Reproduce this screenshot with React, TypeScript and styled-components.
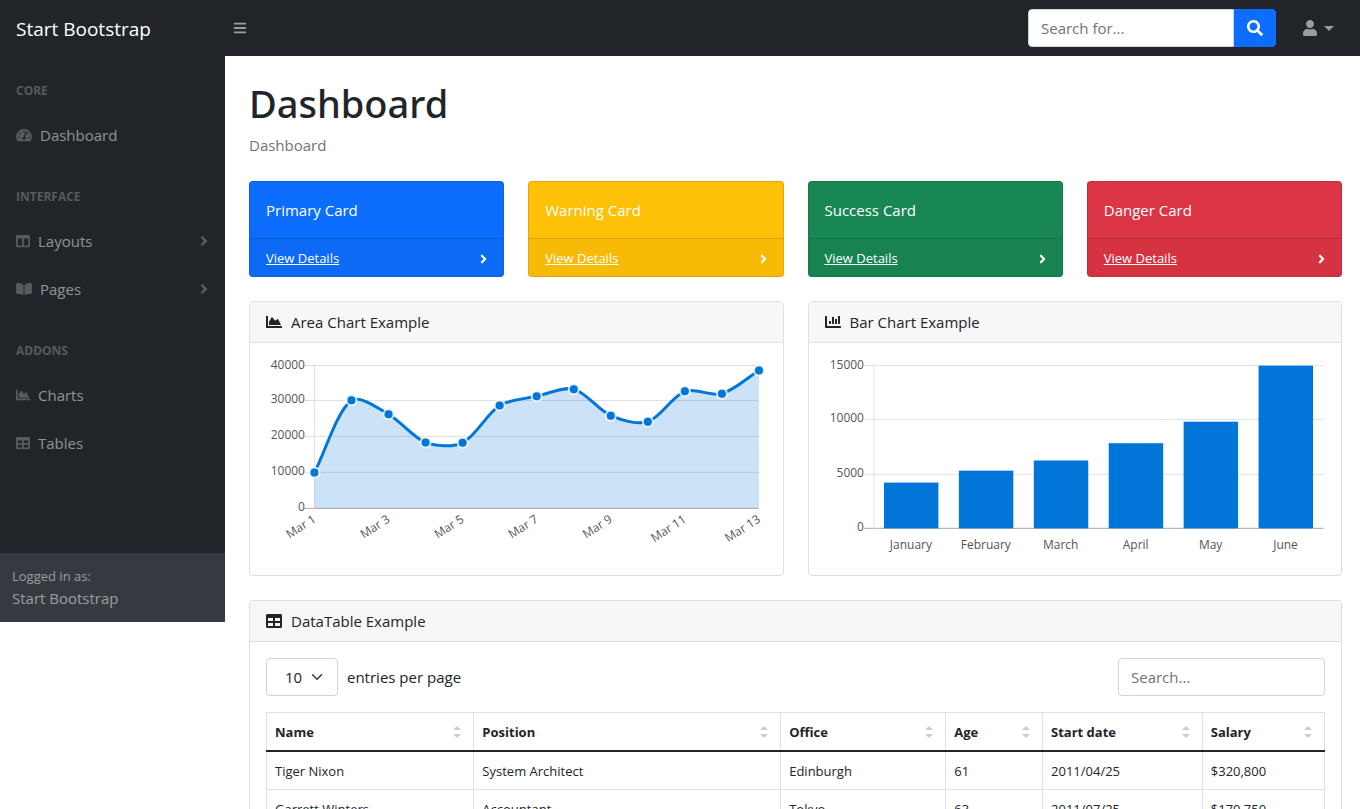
import React from "react";
import styled, { createGlobalStyle } from "styled-components";
import {
  FaAngleRight,
  FaBars,
  FaBookOpen,
  FaChartArea,
  FaChartBar,
  FaColumns,
  FaSearch,
  FaTable,
  FaTachometerAlt,
  FaUser,
} from "react-icons/fa";

const GlobalStyle = createGlobalStyle`
  *, *::before, *::after { box-sizing: border-box; }
  html { scrollbar-width: none; }
  body {
    margin: 0;
    background: #fff;
    color: #212529;
    font-family: "Segoe UI", "Open Sans", "Noto Sans", sans-serif;
    font-size: 15px;
    line-height: 24px;
  }
  button, input, select { font: inherit; color: inherit; }
`;

const TopBar = styled.header`
  display: flex;
  align-items: center;
  height: 56px;
  padding-right: 26px;
  background: #212529;
`;

const Brand = styled.a`
  flex: 0 0 225px;
  padding: 2px 0 0 16px;
  color: #fff;
  font-size: 19px;
  line-height: 30px;
  text-decoration: none;
`;

const PlainButton = styled.button`
  display: flex;
  align-items: center;
  padding: 0;
  border: 0;
  background: none;
  cursor: pointer;
`;

const MenuToggle = styled(PlainButton)`
  margin: 0 auto 0 8px;
  color: rgba(255, 255, 255, 0.55);
`;

const SearchForm = styled.form`
  display: flex;
  width: 248px;
  margin-right: 26px;
`;

const TextInput = styled.input`
  min-width: 0;
  height: 38px;
  padding: 0 12px;
  border: 1px solid #ced4da;
  border-radius: 4px;
  background: #fff;
  outline: none;
  &::placeholder { color: #6c757d; opacity: 1; }
`;

const NavSearch = styled(TextInput)`
  flex: 1;
  border-radius: 4px 0 0 4px;
`;

const SearchButton = styled(PlainButton)`
  justify-content: center;
  width: 42px;
  height: 38px;
  border-radius: 0 4px 4px 0;
  background: #0d6efd;
  color: #fff;
`;

const UserButton = styled(PlainButton)`
  gap: 6px;
  color: rgba(255, 255, 255, 0.55);
`;

const Caret = styled.span`
  border-top: 5px solid;
  border-left: 5px solid transparent;
  border-right: 5px solid transparent;
`;

const Layout = styled.div`
  display: flex;
  align-items: flex-start;
`;

const Sidebar = styled.aside`
  display: flex;
  flex: 0 0 225px;
  flex-direction: column;
  justify-content: space-between;
  min-height: 70vh;
  background: #212529;
  color: rgba(255, 255, 255, 0.5);
`;

const NavSection = styled.section`
  padding-bottom: 3px;
`;

const NavHeading = styled.h2`
  margin: 0;
  padding: 26px 16px 11px;
  color: rgba(255, 255, 255, 0.25);
  font-size: 12px;
  line-height: 18px;
  font-weight: 700;
  text-transform: uppercase;
`;

const NavLink = styled.a`
  display: flex;
  align-items: center;
  gap: 8px;
  padding: 12px 16px;
  color: inherit;
  text-decoration: none;
  svg { color: rgba(255, 255, 255, 0.25); }
`;

const NavLabel = styled.span`
  flex: 1;
`;

const SidebarFooter = styled.footer`
  padding: 12px;
  background: #343a40;
`;

const SmallText = styled.div`
  padding-top: 1px;
  font-size: 13px;
  line-height: 20px;
`;

const Main = styled.main`
  flex: 1;
  min-width: 0;
  padding: 21px 18px 24px 24px;
`;

const PageTitle = styled.h1`
  margin: 0 0 6px;
  padding-top: 2px;
  font-family: "Segoe UI", "Noto Sans", sans-serif;
  font-size: 38px;
  line-height: 48px;
  font-weight: 500;
`;

const Breadcrumb = styled.nav`
  margin-bottom: 24px;
  color: #6c757d;
`;

const Grid = styled.div<{ $columns: number }>`
  display: grid;
  grid-template-columns: repeat(${(p) => p.$columns}, minmax(0, 1fr));
  gap: 24px;
  margin-bottom: 24px;
`;

const StatCard = styled.article<{ $color: string }>`
  border: 1px solid rgba(0, 0, 0, 0.125);
  border-radius: 4px;
  background: ${(p) => p.$color};
  color: #fff;
`;

const StatBody = styled.div`
  padding: 16px;
`;

const StatFooter = styled.div`
  display: flex;
  align-items: center;
  justify-content: space-between;
  padding: 9px 16px 7px;
  border-top: 1px solid rgba(0, 0, 0, 0.125);
  background: rgba(0, 0, 0, 0.03);
  font-size: 13px;
  line-height: 21px;
  a { color: #fff; }
`;

const Card = styled.section`
  border: 1px solid #dfdfdf;
  border-radius: 4px;
  background: #fff;
`;

const CardHeader = styled.header`
  display: flex;
  align-items: center;
  gap: 9px;
  padding: 8px 16px;
  border-bottom: 1px solid #dfdfdf;
  border-radius: 3px 3px 0 0;
  background: #f7f7f7;
`;

const CardBody = styled.div`
  padding: 16px;
`;

const Chart = styled.svg`
  display: block;
  width: 100%;
  height: auto;
  overflow: visible;
  font-size: 12px;
  text { fill: #555; }
`;

const TableTools = styled.div`
  display: flex;
  align-items: center;
  justify-content: space-between;
  margin-bottom: 16px;
`;

const EntriesLabel = styled.label`
  display: flex;
  align-items: center;
  gap: 9px;
`;

const SelectBox = styled.span`
  position: relative;
  width: 72px;
  height: 38px;
  svg {
    position: absolute;
    top: 13px;
    right: 15px;
    pointer-events: none;
  }
`;

const Select = styled.select`
  appearance: none;
  width: 100%;
  height: 100%;
  padding: 0 18px;
  border: 1px solid #ced4da;
  border-radius: 4px;
  background: #fff;
`;

const TableSearch = styled(TextInput)`
  width: 207px;
`;

const DataTable = styled.table`
  width: 100%;
  table-layout: fixed;
  border-collapse: collapse;
  font-size: 13px;
  line-height: 21px;
  th, td {
    padding: 9px 8px 7px;
    border: 1px solid #dee2e6;
    text-align: left;
  }
  thead th { border-bottom: 2px solid #212529; }
`;

const SortButton = styled(PlainButton)`
  justify-content: space-between;
  width: 100%;
  padding-right: 4px;
  font-weight: 700;
`;

const GlyphBox = styled.span<{ $width: number; $height: number }>`
  display: flex;
  flex: none;
  svg {
    width: ${(p) => p.$width}px;
    height: ${(p) => p.$height}px;
  }
`;

type GlyphProps = {
  icon: React.ComponentType;
  width: number;
  height?: number;
};

function Glyph({ icon: Icon, width, height = 14 }: GlyphProps) {
  return (
    <GlyphBox $width={width} $height={height}>
      <Icon />
    </GlyphBox>
  );
}

const areaValues = [10000, 30162, 26263, 18394, 18287, 28682, 31274, 33259, 25849, 24159, 32651, 31984, 38451];
const barValues = [4215, 5312, 6251, 7841, 9821, 14984];
const months = ["January", "February", "March", "April", "May", "June"];

type Point = { x: number; y: number };

/* Cubic spline through the points, with control points scaled by the tension. */
function splinePath(points: Point[], tension: number) {
  const controls = points.map((p, i) => {
    const prev = points[i - 1] ?? p;
    const next = points[i + 1] ?? p;
    const before = Math.hypot(p.x - prev.x, p.y - prev.y);
    const after = Math.hypot(next.x - p.x, next.y - p.y);
    const a = (tension * before) / (before + after);
    const b = (tension * after) / (before + after);
    return {
      inX: p.x - a * (next.x - prev.x),
      inY: p.y - a * (next.y - prev.y),
      outX: p.x + b * (next.x - prev.x),
      outY: p.y + b * (next.y - prev.y),
    };
  });
  return points
    .map((p, i) => {
      if (i === 0) return `M${p.x},${p.y}`;
      const from = controls[i - 1];
      const to = controls[i];
      return `C${from.outX},${from.outY} ${to.inX},${to.inY} ${p.x},${p.y}`;
    })
    .join(" ");
}

function AreaChart() {
  const ticks = [40000, 30000, 20000, 10000, 0];
  const yOf = (v: number) => 149.5 - (v / 40000) * 143.5;
  const lineY = (v: number) => Math.floor(yOf(v)) + 0.5;
  const points = areaValues.map((v, i) => ({ x: 48.5 + i * 37.08, y: yOf(v) }));
  const path = splinePath(points, 0.3);
  return (
    <Chart viewBox="0 0 501 200" role="img" aria-label="Area chart of sessions in March">
      {ticks.map((v) => (
        <g key={v}>
          <line x1="38" x2="493" y1={lineY(v)} y2={lineY(v)} stroke={v ? "#dfdfdf" : "#a8a8a8"} />
          <text x="39" y={lineY(v) + 3} textAnchor="end">{v}</text>
        </g>
      ))}
      <line x1="48.5" x2="48.5" y1="6" y2="150" stroke="#dfdfdf" />
      <path d={`${path} L493.5,149.5 L48.5,149.5 Z`} fill="rgba(2,117,216,0.2)" />
      <path d={path} fill="none" stroke="#0275d8" strokeWidth="3" />
      {points.map((p, i) => (
        <circle key={i} cx={p.x} cy={p.y} r="5" fill="#0275d8" stroke="rgba(255,255,255,0.8)" strokeWidth="2" />
      ))}
      {points.map((p, i) =>
        i % 2 === 0 ? (
          <text key={i} transform={`translate(${p.x} 159) rotate(-33)`} y="4" textAnchor="end">
            Mar {i + 1}
          </text>
        ) : null
      )}
    </Chart>
  );
}

function BarChart() {
  const ticks = [15000, 10000, 5000, 0];
  const yOf = (v: number) => 169.5 - (v / 15000) * 163;
  const lineY = (v: number) => Math.floor(yOf(v)) + 0.5;
  return (
    <Chart viewBox="0 0 501 200" role="img" aria-label="Bar chart of revenue by month">
      {ticks.map((v) => (
        <g key={v}>
          <line x1="39" x2="499" y1={lineY(v)} y2={lineY(v)} stroke={v ? "#e2e2e2" : "#a8a8a8"} />
          <text x="39" y={lineY(v) + 3} textAnchor="end">{v}</text>
        </g>
      ))}
      <line x1="49" x2="49" y1="6" y2="170" stroke="#e2e2e2" />
      {barValues.map((v, i) => (
        <g key={v}>
          <rect x={59 + i * 75} y={yOf(v)} width="54.5" height={169.5 - yOf(v)} fill="#0275d8" />
          <text x={86 + i * 75} y="190" textAnchor="middle">{months[i]}</text>
        </g>
      ))}
    </Chart>
  );
}

const cards = [
  { title: "Primary Card", color: "#0d6efd" },
  { title: "Warning Card", color: "#ffc107" },
  { title: "Success Card", color: "#198754" },
  { title: "Danger Card", color: "#dc3545" },
];

const columns = [
  { name: "Name", width: "19.6%" },
  { name: "Position", width: "29%" },
  { name: "Office", width: "15.6%" },
  { name: "Age", width: "9.15%" },
  { name: "Start date", width: "15.1%" },
  { name: "Salary", width: "11.55%" },
];

const rows = [
  ["Tiger Nixon", "System Architect", "Edinburgh", "61", "2011/04/25", "$320,800"],
  ["Garrett Winters", "Accountant", "Tokyo", "63", "2011/07/25", "$170,750"],
];

export default function App() {
  return (
    <>
      <GlobalStyle />
      <TopBar>
        <Brand href="#">Start Bootstrap</Brand>
        <MenuToggle aria-label="Toggle sidebar">
          <FaBars size={14} />
        </MenuToggle>
        <SearchForm role="search" onSubmit={(e) => e.preventDefault()}>
          <NavSearch type="text" placeholder="Search for..." aria-label="Search for" />
          <SearchButton aria-label="Search"><FaSearch size={16} /></SearchButton>
        </SearchForm>
        <UserButton aria-label="User menu">
          <FaUser size={16} />
          <Caret />
        </UserButton>
      </TopBar>
      <Layout>
        <Sidebar>
          <nav aria-label="Main">
            <NavSection>
              <NavHeading>Core</NavHeading>
              <NavLink href="#"><Glyph icon={FaTachometerAlt} width={16} /><NavLabel>Dashboard</NavLabel></NavLink>
            </NavSection>
            <NavSection>
              <NavHeading>Interface</NavHeading>
              <NavLink href="#"><Glyph icon={FaColumns} width={14} /><NavLabel>Layouts</NavLabel><Glyph icon={FaAngleRight} width={10} height={16} /></NavLink>
              <NavLink href="#"><Glyph icon={FaBookOpen} width={16} /><NavLabel>Pages</NavLabel><Glyph icon={FaAngleRight} width={10} height={16} /></NavLink>
            </NavSection>
            <NavSection>
              <NavHeading>Addons</NavHeading>
              <NavLink href="#"><Glyph icon={FaChartArea} width={14} /><NavLabel>Charts</NavLabel></NavLink>
              <NavLink href="#"><Glyph icon={FaTable} width={14} /><NavLabel>Tables</NavLabel></NavLink>
            </NavSection>
          </nav>
          <SidebarFooter>
            <SmallText>Logged in as:</SmallText>
            Start Bootstrap
          </SidebarFooter>
        </Sidebar>
        <Main>
          <PageTitle>Dashboard</PageTitle>
          <Breadcrumb aria-label="Breadcrumb">Dashboard</Breadcrumb>
          <Grid $columns={4}>
            {cards.map((c) => (
              <StatCard key={c.title} $color={c.color}>
                <StatBody>{c.title}</StatBody>
                <StatFooter>
                  <a href="#">View Details</a>
                  <Glyph icon={FaAngleRight} width={7} height={14} />
                </StatFooter>
              </StatCard>
            ))}
          </Grid>
          <Grid $columns={2}>
            <Card>
              <CardHeader><FaChartArea size={16} />Area Chart Example</CardHeader>
              <CardBody><AreaChart /></CardBody>
            </Card>
            <Card>
              <CardHeader><FaChartBar size={16} />Bar Chart Example</CardHeader>
              <CardBody><BarChart /></CardBody>
            </Card>
          </Grid>
          <Card>
            <CardHeader><FaTable size={16} />DataTable Example</CardHeader>
            <CardBody>
              <TableTools>
                <EntriesLabel>
                  <SelectBox>
                    <Select defaultValue="10">
                      <option>5</option>
                      <option>10</option>
                      <option>15</option>
                    </Select>
                    <svg width="12" height="12" viewBox="0 0 16 16" fill="none" stroke="#343a40" strokeWidth="2" strokeLinecap="round" strokeLinejoin="round">
                      <path d="M2 5l6 6 6-6" />
                    </svg>
                  </SelectBox>
                  entries per page
                </EntriesLabel>
                <TableSearch type="search" placeholder="Search..." aria-label="Search the table" />
              </TableTools>
              <DataTable>
                <colgroup>
                  {columns.map((c) => <col key={c.name} width={c.width} />)}
                </colgroup>
                <thead>
                  <tr>
                    {columns.map((c) => (
                      <th key={c.name} scope="col">
                        <SortButton>
                          {c.name}
                          <svg width="8" height="12" viewBox="0 0 8 12" fill="#ccc" aria-hidden="true">
                            <path d="M0 4l4-4 4 4zM0 8l4 4 4-4z" />
                          </svg>
                        </SortButton>
                      </th>
                    ))}
                  </tr>
                </thead>
                <tbody>
                  {rows.map((r) => (
                    <tr key={r[0]}>{r.map((cell) => <td key={cell}>{cell}</td>)}</tr>
                  ))}
                </tbody>
              </DataTable>
            </CardBody>
          </Card>
        </Main>
      </Layout>
    </>
  );
}
